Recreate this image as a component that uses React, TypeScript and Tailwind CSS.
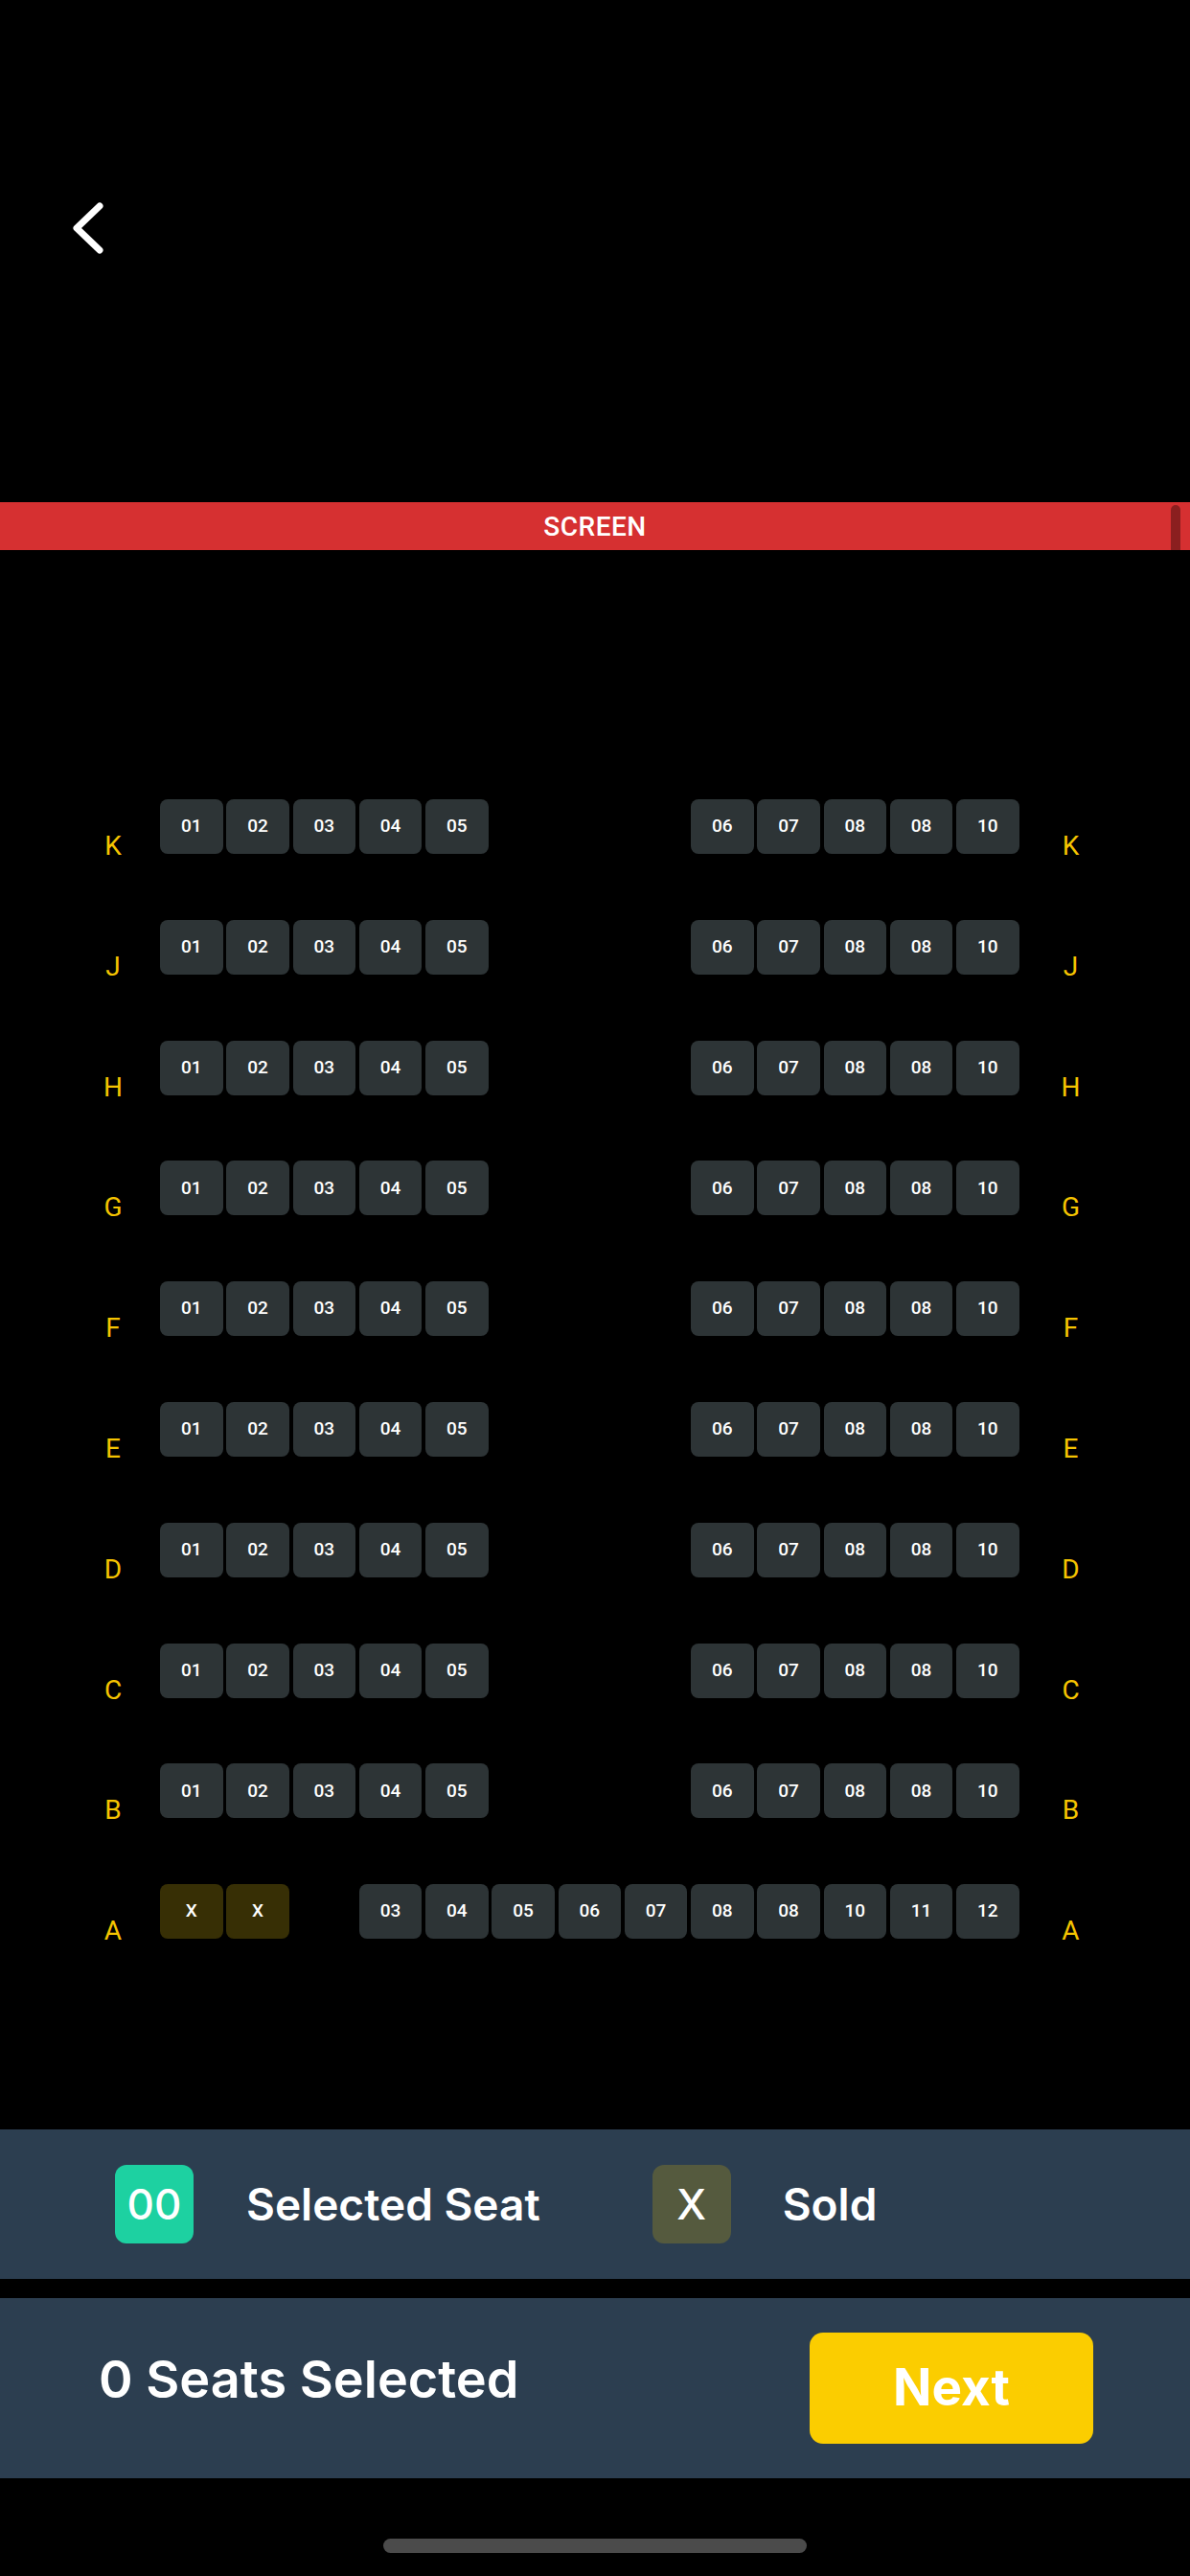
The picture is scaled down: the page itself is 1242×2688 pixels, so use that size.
import React from 'react'

const rows = ['K', 'J', 'H', 'G', 'F', 'E', 'D', 'C', 'B']
const leftSeats = ['01', '02', '03', '04', '05']
const rightSeats = ['06', '07', '08', '08', '10']
const rowASeats = ['03', '04', '05', '06', '07', '08', '08', '10', '11', '12']

function Seat({ label, sold }: { label: string; sold?: boolean }) {
    return (
        <div
            className={`w-[65.5px] h-[57px] shrink-0 rounded-[8px] flex items-center justify-center text-[19px] font-medium text-white ${
                sold ? 'bg-[#372f05]' : 'bg-[#2d3436]'
            }`}
        >
            {label}
        </div>
    )
}

function Gap() {
    return <div className="w-[65.5px] h-[57px] shrink-0" />
}

function RowLabel({ name }: { name: string }) {
    return (
        <div className="w-[50px] shrink-0 text-center text-[28px] leading-[28px] mt-[35px] text-[#f5c400]">
            {name}
        </div>
    )
}

function SeatRow({ name, children }: { name: string; children: React.ReactNode }) {
    return (
        <div className="flex items-start h-[57px] pl-[93px]">
            <RowLabel name={name} />
            <div className="flex gap-[3.75px] ml-[24px]">{children}</div>
            <div className="ml-[29px]">
                <RowLabel name={name} />
            </div>
        </div>
    )
}

export default function App() {
    return (
        <div
            className="w-[1242px] h-[2688px] bg-black flex flex-col overflow-hidden"
            style={{ fontFamily: 'Roboto, "Noto Sans", sans-serif' }}
        >
            {/* Header */}
            <div className="h-[524px] shrink-0 pt-[208px] pl-[70px]">
                <svg width="40" height="60" viewBox="0 0 40 60" fill="none">
                    <path d="M34 7 L10 30 L34 53" stroke="white" strokeWidth="7" strokeLinecap="round" strokeLinejoin="round" />
                </svg>
            </div>

            {/* Screen bar */}
            <div className="relative h-[50px] shrink-0 bg-[#d63031] flex items-center justify-center pt-[2px]">
                <span className="text-[28px] font-medium text-white tracking-[0.5px]">SCREEN</span>
                <div className="absolute right-[10px] top-[3px] bottom-0 w-[10px] rounded-t-full bg-black/35" />
            </div>

            {/* Seats */}
            <div className="flex flex-col gap-[68.8px] pt-[260px]">
                {rows.map((r) => (
                    <SeatRow key={r} name={r}>
                        {leftSeats.map((s, i) => (
                            <Seat key={'l' + i} label={s} />
                        ))}
                        <Gap />
                        <Gap />
                        <Gap />
                        {rightSeats.map((s, i) => (
                            <Seat key={'r' + i} label={s} />
                        ))}
                    </SeatRow>
                ))}
                <SeatRow name="A">
                    <Seat label="X" sold />
                    <Seat label="X" sold />
                    <Gap />
                    {rowASeats.map((s, i) => (
                        <Seat key={i} label={s} />
                    ))}
                </SeatRow>
            </div>

            {/* Legend */}
            <div
                className="mt-[199px] h-[156px] shrink-0 bg-[#2c3e50] flex items-center pl-[120px]"
                style={{ fontFamily: 'Inter, Roboto, sans-serif' }}
            >
                <div className="w-[82px] h-[82px] rounded-[12px] bg-[#1dd1a1] flex items-center justify-center text-[44px] font-medium text-white">
                    00
                </div>
                <span className="ml-[55px] text-[46px] font-semibold text-white">Selected Seat</span>
                <div className="ml-[117px] w-[82px] h-[82px] rounded-[12px] bg-[#555a3e] flex items-center justify-center text-[44px] font-medium text-white">
                    X
                </div>
                <span className="ml-[54px] text-[46px] font-semibold text-white">Sold</span>
            </div>

            {/* Footer */}
            <div
                className="mt-[20px] h-[188px] shrink-0 bg-[#2c3e50] flex items-center justify-between pl-[103px] pr-[101px]"
                style={{ fontFamily: 'Inter, Roboto, sans-serif' }}
            >
                <span className="mb-[20px] text-[54px] font-semibold text-white">0 Seats Selected</span>
                <button className="w-[296px] h-[116px] rounded-[14px] bg-[#fbcd00] text-[53px] font-bold text-white">
                    Next
                </button>
            </div>

            {/* Home indicator */}
            <div className="mt-[63px] mx-auto w-[442px] h-[15px] rounded-full bg-[#4b4b4b]" />
        </div>
    )
}
